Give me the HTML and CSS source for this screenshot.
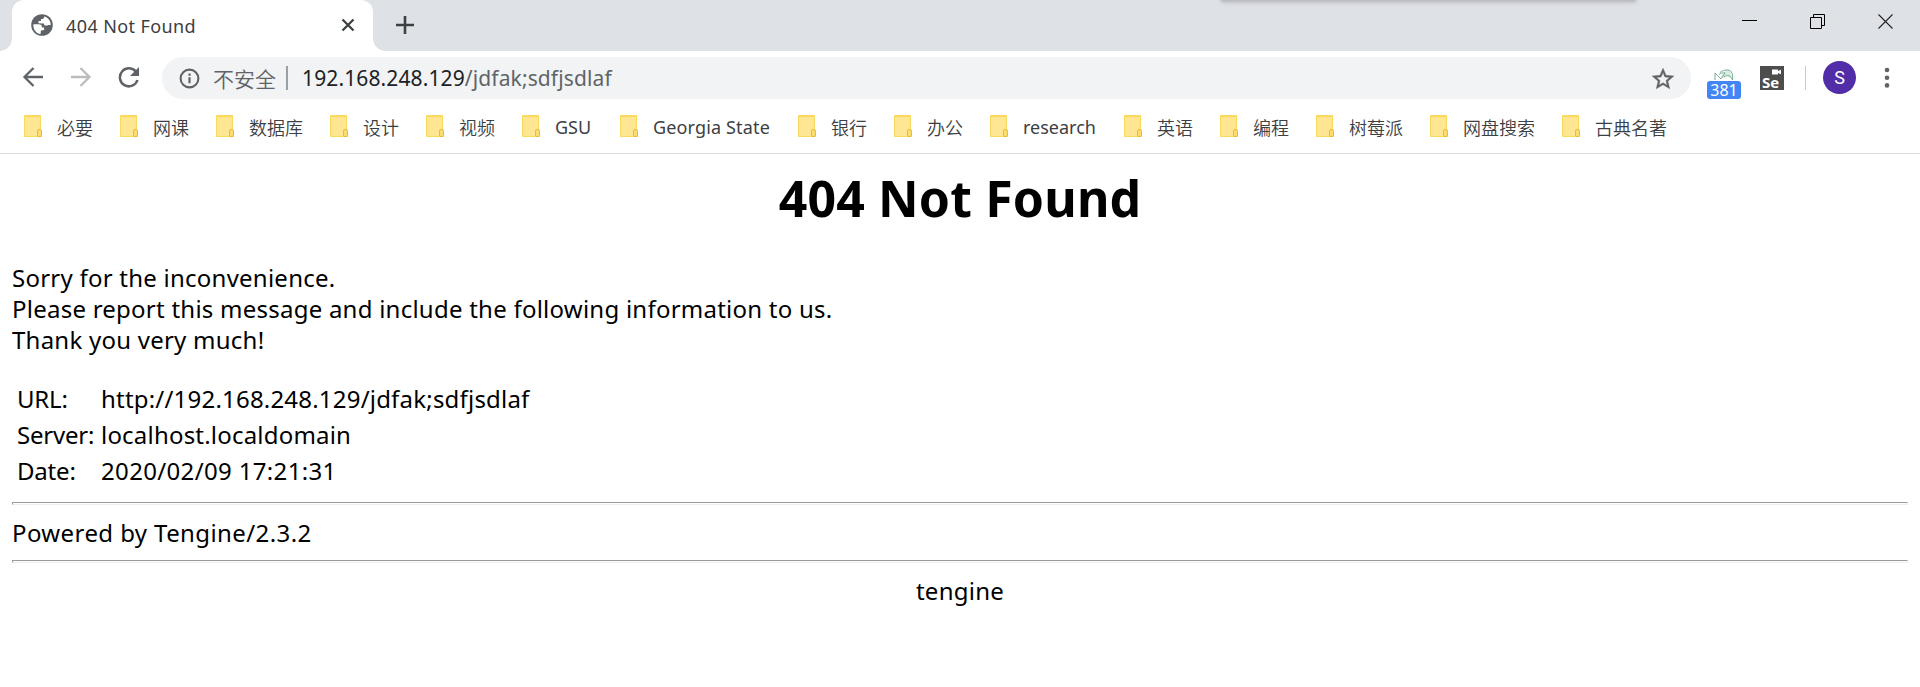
FILE: index.html
```html
<!DOCTYPE html>
<html lang="zh-CN">
<head>
<meta charset="utf-8">
<title>404 Not Found</title>
<link rel="stylesheet" href="styles.css">
</head>
<body>
<header class="browser">
  <div class="tabstrip">
    <div class="tab-prev"></div>
    <div class="tab">
      <svg class="favicon" viewBox="0 0 22 22"><circle cx="11" cy="11" r="10.8" fill="#5f6368"/><path d="M2.300 10.200h5.200c2.600 0 3.600 1.200 3.400 3.200h2.200v2.600l-3.200.4-.3 3.500C5.500 19.700 2 15.800 2.300 10.200ZM13.300 2.500c-.2 1.900-1 2.500-3.100 2.500L9.800 7.100H7.600l-.2 2.200 5.400.1c.3 1.700 1 2.300 2.600 2.200 1.100 0 1.500-.7 2.700-.7l1.600.1C19.700 6.900 17.500 3.700 13.300 2.500Z" fill="#fff"/></svg>
      <span class="tab-title">404 Not Found</span>
      <svg class="tab-close" viewBox="0 0 14 14"><path d="M1.500 1.500l11 11M12.500 1.500l-11 11" stroke="#3c4043" stroke-width="2.300"/></svg>
    </div>
    <svg class="new-tab" viewBox="0 0 18 18"><path d="M9 0v18M0 9h18" stroke="#3c4043" stroke-width="2.600"/></svg>
    <div class="window-buttons">
      <svg viewBox="0 0 16 16"><path d="M0 6.500h15" stroke="#000"/></svg>
      <svg viewBox="0 0 16 16"><path d="M.5 3.500h11v11H.5zM3.500 3.500v-3h11v11h-3" fill="none" stroke="#000"/></svg>
      <svg viewBox="0 0 16 16"><path d="M.5.5l14 14M14.500.5l-14 14" stroke="#222" stroke-width="1.100"/></svg>
    </div>
    <div class="top-shadow"></div>
  </div>
  <div class="toolbar">
    <div class="nav">
      <svg viewBox="0 0 22 22"><path d="M21 11H3M11.500 2L2.500 11l9 9" fill="none" stroke="#5f6368" stroke-width="2.300"/></svg>
      <svg viewBox="0 0 22 22"><path d="M1 11h18M10.500 2l9 9-9 9" fill="none" stroke="#babcbe" stroke-width="2.300"/></svg>
      <svg viewBox="0 0 22 22"><path d="M18.300 6.200A9 9 0 1 0 19.500 14" fill="none" stroke="#5f6368" stroke-width="2.500"/><path d="M21 1v9h-9z" fill="#5f6368"/></svg>
    </div>
    <div class="omnibox">
      <svg class="info" viewBox="0 0 22 22"><circle cx="11" cy="11" r="9.300" fill="none" stroke="#5f6368" stroke-width="2.200"/><path d="M11 5.800v2.300M11 9.800v6.200" stroke="#5f6368" stroke-width="2.300"/></svg>
      <span class="insecure">不安全</span>
      <span class="url"><b>192.168.248.129</b>/jdfak;sdfjsdlaf</span>
      <svg class="star" viewBox="0 0 24 24"><path d="M22 9.240l-7.190-.62L12 2 9.190 8.630 2 9.240l5.460 4.730L5.820 21 12 17.270 18.180 21l-1.630-7.030L22 9.240zM12 15.400l-3.760 2.270 1-4.280-3.320-2.880 4.380-.38L12 6.100l1.710 4.040 4.380.38-3.320 2.880 1 4.280L12 15.400z" fill="#5f6368" stroke="#5f6368" stroke-width=".4"/></svg>
    </div>
    <div class="ext-mail">
      <svg viewBox="0 0 20 12"><path d="M7 8l3-5c3-3 6-2 7 1l1 7c-2-5-6-5-9-2z" fill="#d8ece1"/><path d="M1 11V4l6 6 4-6c-2-.5-5 0-6 1.500M6 3.500C9 1 15-.5 17.500 3c1.200 2 1.200 5 1 8-1.500-4.500-5-5.500-8.500-3" fill="none" stroke="#6aa586" stroke-width=".9"/></svg>
      <span class="badge">381</span>
    </div>
    <div class="ext-se"><svg viewBox="0 0 10 6"><path d="M0 .5h6v1.600L9 .8v4.500L6 4v1.500H0z" fill="#fff"/></svg><span>Se</span></div>
    <div class="separator"></div>
    <div class="avatar">S</div>
    <svg class="menu" viewBox="0 0 6 22"><g fill="#5f6368"><circle cx="3" cy="3" r="2.300"/><circle cx="3" cy="10.800" r="2.300"/><circle cx="3" cy="18.400" r="2.300"/></g></svg>
  </div>
  <nav class="bookmarks">
    <a><i></i>必要</a><a><i></i>网课</a><a><i></i>数据库</a><a><i></i>设计</a><a><i></i>视频</a>
    <a class="gsu"><i></i>GSU</a><a class="georgia"><i></i>Georgia State</a><a><i></i>银行</a><a><i></i>办公</a>
    <a class="research"><i></i>research</a><a><i></i>英语</a><a><i></i>编程</a><a><i></i>树莓派</a><a><i></i>网盘搜索</a><a><i></i>古典名著</a>
  </nav>
</header>
<main class="page">
  <h1>404 Not Found</h1>
  <p class="message">Sorry for the inconvenience.<br>Please report this message and include the following information to us.<br>Thank you very much!</p>
  <dl class="details">
    <dt>URL:</dt><dd>http://192.168.248.129/jdfak;sdfjsdlaf</dd>
    <dt>Server:</dt><dd>localhost.localdomain</dd>
    <dt>Date:</dt><dd class="date">2020/02/09 17:21:31</dd>
  </dl>
  <div class="rule"></div>
  <div class="powered">Powered by Tengine/2.3.2</div>
  <div class="rule"></div>
  <div class="engine">tengine</div>
</main>
</body>
</html>
```
FILE: styles.css
```css
*, *::before, *::after { box-sizing: border-box; }
body { margin: 0; height: 687px; overflow: hidden; background: #fff; color: #000; font-family: "Noto Sans", "Noto Sans CJK SC", sans-serif; }
svg { display: block; flex: none; }

.tabstrip { position: relative; display: flex; height: 51px; background: #dee1e6; }
.tab-prev { width: 12px; height: 51px; background: radial-gradient(circle at 0 0, #dee1e6 11.5px, #fff 12px) 0 39px / 12px 12px no-repeat; }
.tab { position: relative; display: flex; align-items: center; width: 361px; height: 51px; padding: 0 18px 0 19px; background: #fff; border-radius: 12px 12px 0 0; }
.tab::after { content: ""; position: absolute; left: 361px; bottom: 0; width: 12px; height: 12px; background: radial-gradient(circle at 100% 0, #dee1e6 11.5px, #fff 12px); }
.favicon { width: 22px; height: 22px; margin-top: -1px; }
.tab-title { flex: 1; margin-left: 13px; font-size: 18px; line-height: 50px; letter-spacing: .4px; color: #3c4043; white-space: nowrap; }
.tab-close { width: 14px; height: 14px; margin-top: -1px; }
.new-tab { width: 18px; height: 18px; margin: 16px 0 0 23px; }
.window-buttons { display: flex; gap: 52px; margin: 14px 26px 0 auto; }
.window-buttons svg { width: 16px; height: 16px; }
.top-shadow { position: absolute; left: 1222px; top: -4px; width: 413px; height: 5px; background: #bbbdc2; box-shadow: 0 0 4px 1px #aeb0b5; }

.toolbar { display: flex; height: 54px; padding: 6px 30px 0 22px; }
.nav { display: flex; gap: 26px; width: 140px; padding-top: 9px; }
.nav svg { width: 22px; height: 22px; }
.omnibox { display: flex; align-items: center; width: 1529px; height: 42px; padding: 0 15px 0 17px; border-radius: 21px; background: #f1f3f4; font-size: 21px; line-height: 42px; color: #5f6368; white-space: nowrap; }
.info { width: 21px; height: 21px; }
.insecure { display: flex; align-items: center; width: 75px; margin-left: 13px; font-family: "Noto Sans CJK SC", sans-serif; font-weight: 350; border-right: 2px solid #9aa0a6; height: 24px; }
.url { flex: 1; margin-left: 14px; letter-spacing: .12px; }
.url b { font-weight: 400; color: #202124; }
.star { width: 26px; height: 26px; margin-top: 1px; }
.ext-mail { width: 34px; margin-left: 16px; padding-top: 12px; }
.ext-mail svg { width: 20px; height: 12px; margin-left: 7px; }
.badge { display: block; height: 18px; border-radius: 3px; background: #4285f4; color: #fff; font-size: 16px; line-height: 18px; text-align: center; }
.ext-se { position: relative; width: 24px; height: 24px; margin: 9px 0 0 19px; background: #4d4d4d; color: #fff; font: 700 15px/14px "Open Sans", sans-serif; padding: 9px 0 0 2px; }
.ext-se svg { position: absolute; left: 12px; top: 3px; width: 10px; height: 6px; }
.separator { width: 1px; height: 24px; margin: 9px 0 0 21px; background: #c8cacd; }
.avatar { width: 33px; height: 33px; margin: 4px 0 0 17px; border-radius: 50%; background: #512da8; color: #fff; font: 18px/34px Roboto, sans-serif; text-align: center; }
.menu { width: 6px; height: 22px; margin: 10px 0 0 28px; }

.bookmarks { display: flex; gap: 27px; height: 49px; padding: 0 24px; border-bottom: 1px solid #dadce0; font: 350 18px/44px "Noto Sans CJK SC", sans-serif; color: #3c4043; white-space: nowrap; }
.bookmarks a { display: flex; gap: 15px; }
.bookmarks i { position: relative; width: 17px; height: 22px; margin: 10px 1px 0 0; background: #ffe693; border: 1px solid #fbd95d; border-top-width: 2px; border-radius: 1px; }
.bookmarks i::after { content: ""; position: absolute; right: -2px; bottom: -1px; width: 5px; height: 8px; border: 1px solid #e8bd35; border-radius: 2px 2px 1px 1px; background: #fddd70; }
.bookmarks .gsu, .bookmarks .georgia, .bookmarks .research { font-family: "Noto Sans", sans-serif; font-weight: 400; }
.gsu { width: 71px; }
.georgia { width: 151px; letter-spacing: .15px; }
.research { width: 107px; }

.page { padding: 0 12px; font-size: 24px; line-height: 31px; letter-spacing: .24px; }
h1 { margin: 0; padding-top: 13px; height: 108px; font-size: 50px; line-height: 62px; letter-spacing: .15px; text-align: center; white-space: nowrap; }
.message { margin: 0; height: 117px; }
.details { display: grid; grid-template-columns: 84px 1fr; grid-auto-rows: 36px; margin: 0 0 0 5px; padding-top: 2px; height: 123px; line-height: 36px; white-space: nowrap; }
.details dt { letter-spacing: -.2px; }
.details dd { margin: 0; letter-spacing: .2px; }
.details .date { letter-spacing: .34px; }
.rule { height: 3px; border: 1px solid #eee; border-top-color: #9a9a9a; border-left-color: #9a9a9a; }
.powered { height: 55px; padding-top: 12px; letter-spacing: .4px; }
.engine { padding-top: 12px; text-align: center; }
```
